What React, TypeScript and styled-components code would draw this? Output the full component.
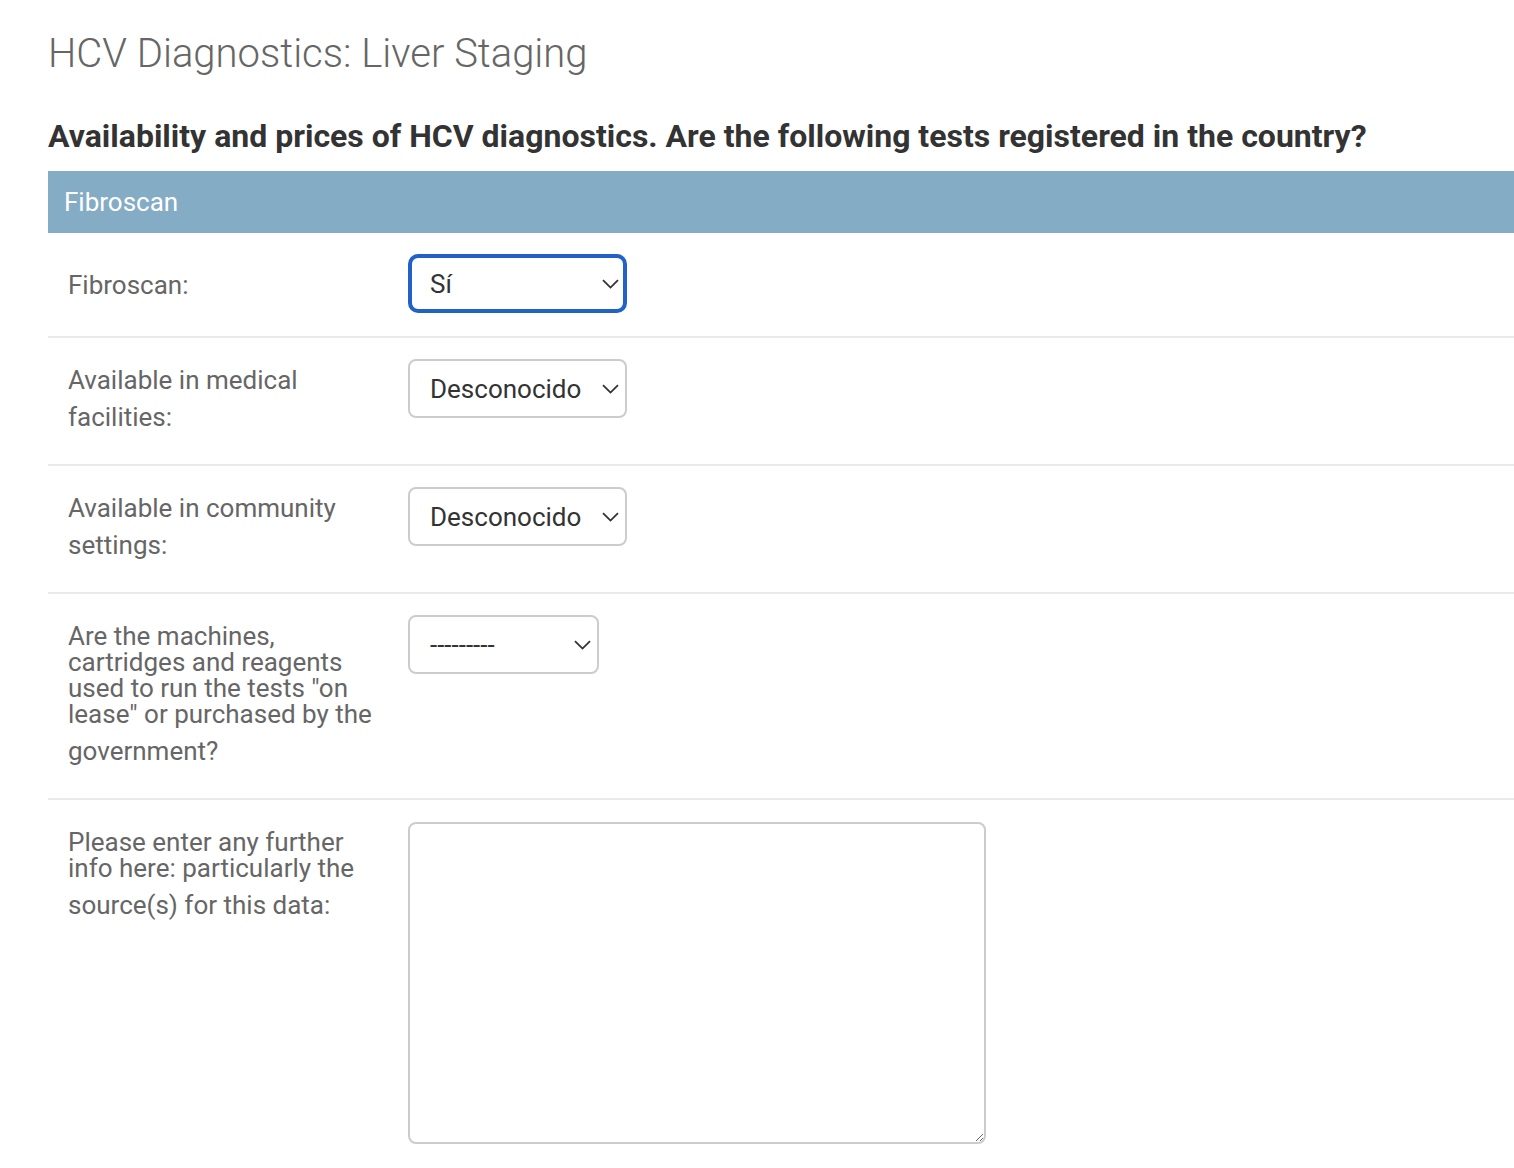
import React from 'react';
import styled, { createGlobalStyle } from 'styled-components';

const GlobalStyle = createGlobalStyle`
  html, body {
    margin: 0;
    padding: 0;
    background: #fff;
    font-family: Roboto, "Noto Sans", "Liberation Sans", sans-serif;
  }
`;

const colours = {
  quiet: '#666',
  body: '#333',
  caption: '#84acc5',
  hairline: '#eaeaea',
  border: '#cccccc',
  focus: '#2261c8',
};

const Page = styled.div`
  padding: 0 0 0 48px;
`;

const Title = styled.h1`
  margin: 29px 0 0;
  font-size: 40px;
  font-weight: 300;
  line-height: 49px;
  color: ${colours.quiet};
`;

const Subtitle = styled.h2`
  margin: 38px 0 15px;
  font-size: 32px;
  font-weight: 700;
  line-height: 40px;
  color: ${colours.body};
`;

const Fieldset = styled.section`
  display: flex;
  flex-direction: column;
`;

const Caption = styled.div`
  height: 62px;
  line-height: 62px;
  padding: 0 16px;
  background-color: ${colours.caption};
  color: #fff;
  font-size: 26px;
  font-weight: 400;
`;

const Row = styled.div<{ $last?: boolean }>`
  display: flex;
  align-items: flex-start;
  padding: 21px 20px 19px;
  border-bottom: ${(p) => (p.$last ? 'none' : `2px solid ${colours.hairline}`)};
`;

const Label = styled.label<{ $top?: number }>`
  display: block;
  width: 340px;
  flex-shrink: 0;
  padding: ${(p) => p.$top ?? 3}px 0 9px;
  box-sizing: border-box;
  font-size: 26px;
  line-height: 37px;
  color: ${colours.quiet};
`;

const Line = styled.span`
  display: block;
  white-space: nowrap;
`;

const Tight = styled.span`
  display: block;
  margin: 5px 0 6px;
  line-height: 26px;
`;

const Field = styled.div`
  min-height: 63px;
`;

const SelectWrap = styled.div<{ $width: number }>`
  position: relative;
  width: ${(p) => p.$width}px;
`;

const Select = styled.select<{ $focused?: boolean }>`
  appearance: none;
  -webkit-appearance: none;
  display: block;
  width: 100%;
  height: 59px;
  box-sizing: border-box;
  margin: 0;
  padding: 0 28px 0 ${(p) => (p.$focused ? 18 : 20)}px;
  border: ${(p) => (p.$focused ? `4px solid ${colours.focus}` : `2px solid ${colours.border}`)};
  border-radius: ${(p) => (p.$focused ? 10 : 8)}px;
  background: #fff;
  font-family: Roboto, "Noto Sans", sans-serif;
  font-size: 26px;
  color: ${colours.body};
  outline: none;
`;

const Chevron = styled.svg`
  position: absolute;
  right: 8px;
  top: 50%;
  margin-top: -5px;
  pointer-events: none;
`;

const TextArea = styled.textarea`
  display: block;
  width: 578px;
  height: 322px;
  box-sizing: border-box;
  margin: 1px 0 0;
  padding: 10px 14px;
  border: 2px solid ${colours.border};
  border-radius: 8px;
  font-family: Roboto, "Noto Sans", sans-serif;
  font-size: 26px;
  color: ${colours.body};
  outline: none;
`;

type Choice = { value: string; width: number; focused?: boolean };

function Dropdown({ value, width, focused }: Choice) {
  return (
    <SelectWrap $width={width}>
      <Select $focused={focused} defaultValue={value}>
        <option value="---------">---------</option>
        <option value="Sí">Sí</option>
        <option value="No">No</option>
        <option value="Desconocido">Desconocido</option>
      </Select>
      <Chevron width="17" height="10" viewBox="0 0 17 10">
        <path d="M1 1.2 L8.5 8.6 L16 1.2" fill="none" stroke="#333" strokeWidth="1.8" />
      </Chevron>
    </SelectWrap>
  );
}

export default function App() {
  return (
    <Page>
      <GlobalStyle />
      <Title>HCV Diagnostics: Liver Staging</Title>
      <Subtitle>
        Availability and prices of HCV diagnostics. Are the following tests registered in the country?
      </Subtitle>
      <Fieldset>
        <Caption>Fibroscan</Caption>

        <Row>
          <Label $top={13}>Fibroscan:</Label>
          <Field>
            <Dropdown value="Sí" width={219} focused />
          </Field>
        </Row>

        <Row>
          <Label>
            <Line>Available in medical</Line>
            <Line>facilities:</Line>
          </Label>
          <Field>
            <Dropdown value="Desconocido" width={219} />
          </Field>
        </Row>

        <Row>
          <Label>
            <Line>Available in community</Line>
            <Line>settings:</Line>
          </Label>
          <Field>
            <Dropdown value="Desconocido" width={219} />
          </Field>
        </Row>

        <Row>
          <Label>
            <Tight>
              <Line>Are the machines,</Line>
              <Line>cartridges and reagents</Line>
              <Line>used to run the tests "on</Line>
              <Line>lease" or purchased by the</Line>
            </Tight>
            <Line>government?</Line>
          </Label>
          <Field>
            <Dropdown value="---------" width={191} />
          </Field>
        </Row>

        <Row $last>
          <Label>
            <Tight>
              <Line>Please enter any further</Line>
              <Line>info here: particularly the</Line>
            </Tight>
            <Line>source(s) for this data:</Line>
          </Label>
          <Field>
            <TextArea />
          </Field>
        </Row>
      </Fieldset>
    </Page>
  );
}
